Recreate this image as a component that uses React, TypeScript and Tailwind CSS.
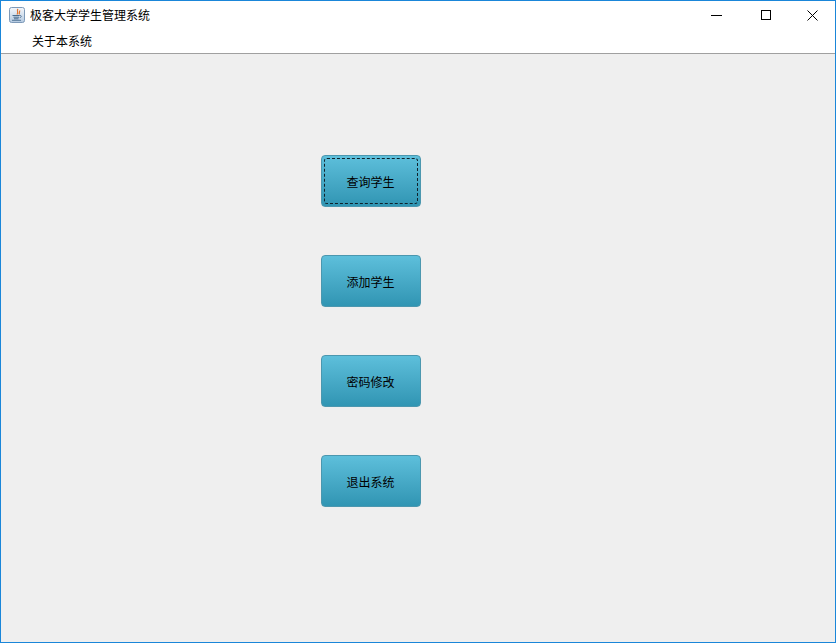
const font = { fontFamily: '"Noto Sans CJK SC", "Liberation Sans", sans-serif' };

function JavaIcon() {
  return (
    <svg width="16" height="16" viewBox="0 0 16 16" className="shrink-0">
      <defs>
        <linearGradient id="jbg" x1="0" y1="0" x2="0" y2="1">
          <stop offset="0" stopColor="#f4f7fb" />
          <stop offset="1" stopColor="#b4c9e0" />
        </linearGradient>
      </defs>
      <rect x="0.5" y="0.5" width="15" height="15" rx="2" fill="url(#jbg)" stroke="#7d99b8" />
      <path d="M9 2C7.2 4 10 5 8 7.5M11 3.5C9.8 5 11 5.8 10 7.3" fill="none" stroke="#e0752f" strokeWidth="1.2" />
      <path d="M3.5 8.5h7M4.5 10.2h5.5M5 11.8h4.5" stroke="#4a6d90" strokeWidth="1" fill="none" />
      <path d="M10.5 8.5c2.2 -.5 2.5 1.8 .2 2.2" stroke="#4a6d90" strokeWidth="0.9" fill="none" />
      <path d="M3 13.3h9" stroke="#4a6d90" strokeWidth="0.9" />
    </svg>
  );
}

function MenuButton({ label, focused }: { label: string; focused?: boolean }) {
  return (
    <button
      className="relative flex h-[52px] w-[100px] items-center justify-center rounded-[4px] border border-[#4b97af] bg-gradient-to-b from-[#5dbfdb] to-[#3095b3] pt-[2px] pr-[1px] text-[12px] leading-none text-black"
      style={font}
    >
      {focused && (
        <span className="absolute inset-[2px] rounded-[3px] border border-dashed border-[#10222b]" />
      )}
      {label}
    </button>
  );
}

export default function App() {
  return (
    <div
      className="flex h-[643px] w-[836px] flex-col overflow-hidden border border-[#1a86d9] bg-white"
      style={font}
    >
      <div className="flex h-[28px] shrink-0 items-center pl-[8px]">
        <JavaIcon />
        <span className="ml-[5px] text-[12px] leading-none text-black">极客大学学生管理系统</span>
        <div className="ml-auto flex items-center">
          <svg width="11" height="11" viewBox="0 0 11 11" className="mr-[39px]">
            <path d="M0 5.5h11" stroke="#000" strokeWidth="1" />
          </svg>
          <svg width="11" height="11" viewBox="0 0 11 11" className="mr-[35px]">
            <rect x="0.5" y="0.5" width="9" height="9" fill="none" stroke="#000" />
          </svg>
          <svg width="11" height="11" viewBox="0 0 11 11" className="mr-[17px]">
            <path d="M0.5 0.5l10 10M10.5 0.5l-10 10" stroke="#000" strokeWidth="1" />
          </svg>
        </div>
      </div>
      <div className="flex h-[25px] shrink-0 items-center border-b border-[#a0a0a0] pb-[1px] pl-[31px]">
        <span className="text-[12px] leading-none text-black">关于本系统</span>
      </div>
      <main className="flex flex-1 flex-col items-start gap-[48px] bg-[#efefef] pl-[320px] pt-[101px]">
        <MenuButton label="查询学生" focused />
        <MenuButton label="添加学生" />
        <MenuButton label="密码修改" />
        <MenuButton label="退出系统" />
      </main>
    </div>
  );
}
